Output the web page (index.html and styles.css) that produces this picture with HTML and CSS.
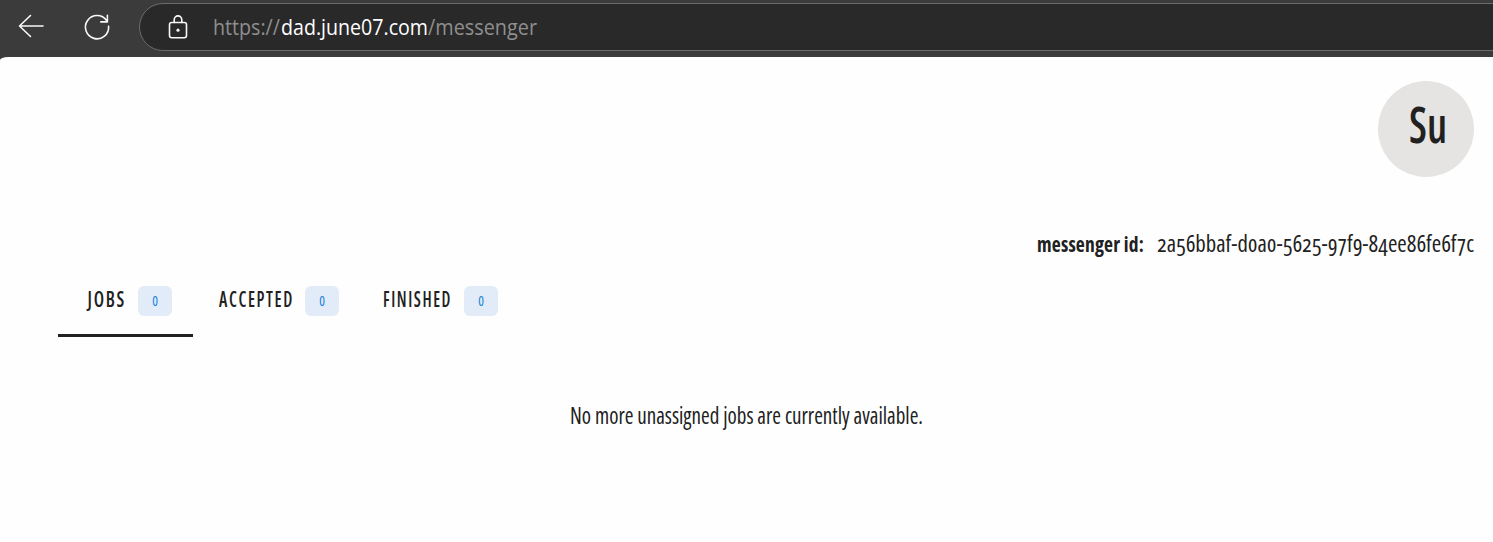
FILE: index.html
```html
<!DOCTYPE html>
<html lang="en">
<head>
<meta charset="utf-8">
<title>Messenger</title>
<link rel="stylesheet" href="styles.css">
</head>
<body>
<header class="toolbar">
  <svg class="back" width="26" height="24" viewBox="0 0 26 24"><path d="M12.5 1.5 1.5 12l11 10.5M1.5 12H25"/></svg>
  <svg class="reload" width="26" height="28" viewBox="0 0 26 28"><path d="M24.6 13.2A11.6 11.6 0 1 1 22.6 7.6L23.4 8.7M23.4 2.3v6.6h-6.6"/></svg>
  <div class="address">
    <svg class="lock" width="20" height="26" viewBox="0 0 20 26"><rect x="1.5" y="8.5" width="17" height="15.2" rx="2.2"/><path d="M6.2 8.5V5.7a3.8 3.8 0 0 1 7.6 0v2.8"/><circle class="dot" cx="10" cy="16.2" r="1.6"/></svg>
    <svg class="url" width="330" height="36"><text x="0" y="25" textLength="67" lengthAdjust="spacingAndGlyphs">https://</text><text class="host" x="68" y="25" textLength="147" lengthAdjust="spacingAndGlyphs">dad.june07.com</text><text x="215" y="25" textLength="109" lengthAdjust="spacingAndGlyphs">/messenger</text></svg>
  </div>
</header>
<main class="page">
  <div class="avatar"><svg width="40" height="60"><text x="1" y="45" textLength="38" lengthAdjust="spacingAndGlyphs">Su</text></svg></div>
  <div class="identity">
    <svg class="label" width="108" height="32"><text x="1" y="24" textLength="107" lengthAdjust="spacingAndGlyphs">messenger id:</text></svg>
    <svg width="318" height="32"><text x="1" y="24" textLength="317" lengthAdjust="spacingAndGlyphs">2a56bbaf-d0a0-5625-97f9-84ee86fe6f7c</text></svg>
  </div>
  <nav class="tabs">
    <a class="tab active"><svg width="38" height="28"><text x="0.5" y="21" textLength="38.5" lengthAdjust="spacingAndGlyphs">JOBS</text></svg><span class="badge">0</span></a>
    <a class="tab second"><svg width="74" height="28"><text x="0" y="21" textLength="75" lengthAdjust="spacingAndGlyphs">ACCEPTED</text></svg><span class="badge">0</span></a>
    <a class="tab third"><svg width="69" height="28"><text x="0" y="21" textLength="69" lengthAdjust="spacingAndGlyphs">FINISHED</text></svg><span class="badge">0</span></a>
  </nav>
  <p class="empty"><svg width="353" height="32"><text x="0" y="24" textLength="353" lengthAdjust="spacingAndGlyphs">No more unassigned jobs are currently available.</text></svg></p>
</main>
</body>
</html>
```
FILE: styles.css
```css
* { box-sizing: border-box; }
body { margin: 0; width: 1493px; height: 542px; overflow: hidden; background: #3b3b3b; font-family: "Open Sans", sans-serif; }
svg { display: block; flex: none; overflow: visible; }
.toolbar { display: flex; height: 57px; padding-top: 3px; align-items: flex-start; }
.toolbar svg { fill: none; stroke: #f8f8f8; stroke-width: 1.6; stroke-linecap: round; stroke-linejoin: round; }
.back { margin: 11px 0 0 18px; }
.reload { margin: 10px 0 0 40px; }
.address { display: flex; flex: 1; height: 48px; margin-left: 29px; margin-right: -30px; border: 1px solid #6b6b6b; border-radius: 24px; background: #292929; }
.address .lock { margin: 10px 0 0 28px; }
.lock .dot { fill: #f4f4f4; stroke: none; }
.toolbar .url { margin: 6px 0 0 25px; stroke: none; fill: #8f8f8f; font: 21px "Open Sans", sans-serif; }
.toolbar .url text { stroke: none; }
.url .host { fill: #fff; }
.page { display: flex; flex-direction: column; height: 485px; padding: 24px 19px 0 0; background: #fefefe; border-top-left-radius: 8px 3px; fill: #212121; }
.avatar { width: 96px; height: 96px; padding: 17px 0 0 30px; align-self: flex-end; border-radius: 50%; background: #e5e4e2; font-size: 51px; font-stretch: 75%; font-weight: 600; }
.identity { display: flex; gap: 12px; margin-top: 51px; align-self: flex-end; font-size: 24px; font-stretch: 75%; font-feature-settings: "onum"; }
.identity .label { font-size: 22px; font-weight: 700; letter-spacing: 0.2px; }
.tabs { display: flex; height: 76px; margin: 1px 0 0 58px; font-size: 21px; font-stretch: 75%; font-weight: 600; letter-spacing: 2px; }
.tab { display: flex; height: 76px; padding: 25px 21px 0 29px; gap: 13px; }
.tab.active { border-bottom: 3px solid #212121; }
.tab.second { padding-left: 26px; padding-right: 22px; gap: 12px; }
.tab.third { padding-left: 22px; gap: 12px; }
.badge { width: 34px; height: 30px; border-radius: 6px; background: #e2ecf8; color: #1680d8; font: 500 13.5px/30px "Open Sans", sans-serif; font-stretch: 80%; letter-spacing: 0; text-align: center; }
.empty { margin: 63px 0 0 570px; font-size: 24px; font-stretch: 75%; }
```
